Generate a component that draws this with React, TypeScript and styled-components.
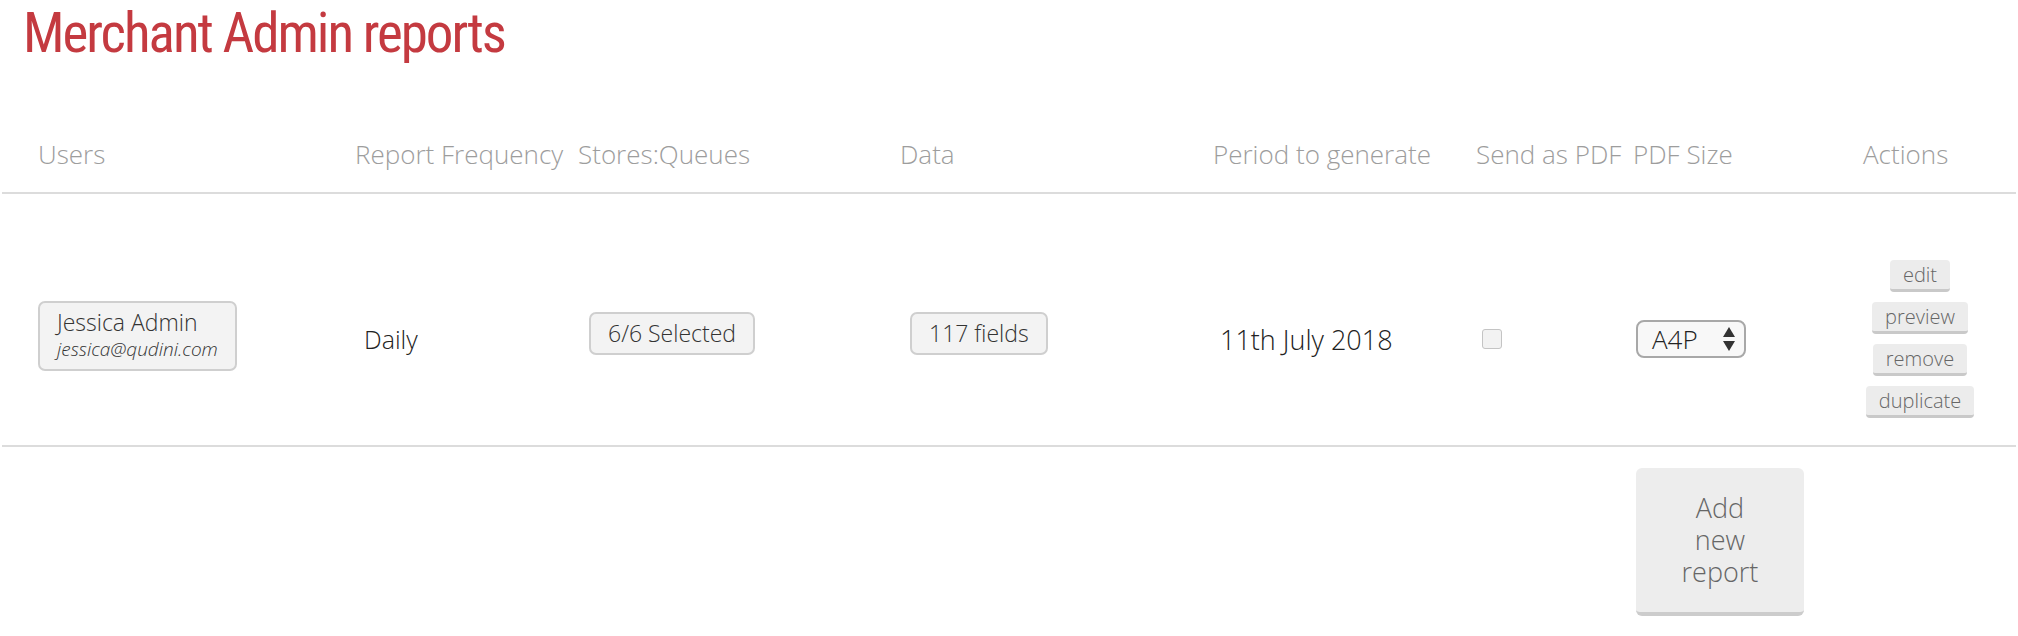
import * as React from 'react'
import styled, { createGlobalStyle } from 'styled-components'

const GlobalStyle = createGlobalStyle`
  html, body {
    margin: 0;
    padding: 0;
    background: #fff;
  }
  body {
    font-family: "Open Sans", "Noto Sans", sans-serif;
    color: #333;
  }
`

const columns = '317px 223px 322px 313px 263px 157px 230px 1fr'

const Page = styled.div`
  width: 2018px;
  height: 636px;
  overflow: hidden;
`

const Title = styled.h1`
  margin: 0;
  padding: 4px 0 0 23px;
  height: 62px;
  box-sizing: border-box;
  font-family: "Roboto Condensed", "Liberation Sans Narrow", "DejaVu Sans Condensed", sans-serif;
  font-weight: 400;
  font-size: 55px;
  letter-spacing: -2px;
  line-height: 58px;
  color: #c43a40;
  white-space: nowrap;
`

const Table = styled.div`
  margin: 56px 2px 0;
`

const HeadRow = styled.div`
  display: grid;
  grid-template-columns: ${columns};
  align-items: center;
  height: 71px;
  padding: 0 0 3px 28px;
  border-bottom: 2px solid #dcdcdc;
`

const HeadCell = styled.div`
  padding-left: 8px;
  font-size: 26px;
  font-weight: 300;
  color: #9d9d9d;
  white-space: nowrap;
`

const Row = styled.div`
  display: grid;
  grid-template-columns: ${columns};
  align-items: center;
  padding: 66px 0 27px 28px;
  border-bottom: 2px solid #dcdcdc;
`

const Cell = styled.div<{ $inset?: number }>`
  display: flex;
  align-items: center;
  padding-left: ${(p) => p.$inset ?? 18}px;
  font-size: 25px;
  font-weight: 300;
  color: #222;
  white-space: nowrap;
`

const UserChip = styled.div`
  display: flex;
  flex-direction: column;
  margin-bottom: 6px;
  padding: 6px 17px 6px;
  background: #f3f3f3;
  border: 2px solid #cfcfcf;
  border-radius: 7px;
`

const UserName = styled.span`
  font-size: 23px;
  line-height: 27px;
  font-weight: 300;
  color: #333;
`

const UserEmail = styled.span`
  font-size: 19px;
  line-height: 27px;
  font-style: italic;
  font-weight: 300;
  color: #333;
`

const Chip = styled.button`
  height: 43px;
  margin-bottom: 12px;
  padding: 0 17px;
  background: #f3f3f3;
  border: 2px solid #cfcfcf;
  border-radius: 7px;
  font-family: inherit;
  font-size: 23px;
  font-weight: 300;
  color: #333;
`

const DateText = styled.span`
  font-size: 27px;
  font-weight: 300;
  color: #222;
`

const Check = styled.input`
  appearance: none;
  width: 20px;
  height: 20px;
  margin: 0;
  border: 1.5px solid #c4c4c4;
  border-radius: 3px;
  background: #f2f2f2;
`

const SizeSelect = styled.div`
  display: flex;
  align-items: center;
  justify-content: space-between;
  width: 110px;
  height: 38px;
  box-sizing: border-box;
  padding: 0 9px 0 14px;
  border: 2px solid #a8a8a8;
  border-radius: 8px;
  background: #f8f8f8;
  font-size: 26px;
  font-weight: 300;
  color: #222;
`

const ActionStack = styled.div`
  display: flex;
  flex-direction: column;
  align-items: center;
  gap: 10px;
  width: 114px;
`

const ActionButton = styled.button`
  height: 32px;
  box-sizing: border-box;
  padding: 0 13px;
  background: #ececec;
  border: none;
  border-bottom: 3px solid #c9c9c9;
  border-radius: 4px;
  font-family: inherit;
  font-size: 20px;
  font-weight: 300;
  line-height: 29px;
  color: #666;
`

const FootRow = styled.div`
  display: grid;
  grid-template-columns: ${columns};
  padding: 21px 0 0 28px;
`

const AddCell = styled.div`
  grid-column: 7;
  padding-left: 11px;
`

const AddButton = styled.button`
  display: flex;
  align-items: center;
  justify-content: center;
  width: 168px;
  height: 148px;
  box-sizing: border-box;
  padding: 0;
  background: #ededed;
  border: none;
  border-bottom: 4px solid #cccccc;
  border-radius: 6px;
  font-family: inherit;
  color: #666;
`

const AddLabel = styled.span`
  width: 90px;
  font-size: 27px;
  font-weight: 300;
  line-height: 32px;
  text-align: center;
`

const headers = [
  'Users',
  'Report Frequency',
  'Stores:Queues',
  'Data',
  'Period to generate',
  'Send as PDF',
  'PDF Size',
  'Actions',
]

const actions = ['edit', 'preview', 'remove', 'duplicate']

const SelectArrows = () => (
  <svg width="12" height="24" viewBox="0 0 12 24">
    <path d="M0 10 L6 0 L12 10 Z" fill="#333" />
    <path d="M0 14 L12 14 L6 24 Z" fill="#333" />
  </svg>
)

export default function App() {
  return (
    <Page>
      <GlobalStyle />
      <Title>Merchant Admin reports</Title>
      <Table>
        <HeadRow>
          {headers.map((h) => (
            <HeadCell key={h}>{h}</HeadCell>
          ))}
        </HeadRow>
        <Row>
          <Cell $inset={8}>
            <UserChip>
              <UserName>Jessica Admin</UserName>
              <UserEmail>jessica@qudini.com</UserEmail>
            </UserChip>
          </Cell>
          <Cell $inset={17}>Daily</Cell>
          <Cell $inset={19}>
            <Chip>6/6 Selected</Chip>
          </Cell>
          <Cell>
            <Chip>117 fields</Chip>
          </Cell>
          <Cell $inset={15}>
            <DateText>11th July 2018</DateText>
          </Cell>
          <Cell $inset={14}>
            <Check type="checkbox" />
          </Cell>
          <Cell $inset={11}>
            <SizeSelect>
              <span>A4P</span>
              <SelectArrows />
            </SizeSelect>
          </Cell>
          <Cell $inset={8}>
            <ActionStack>
              {actions.map((a) => (
                <ActionButton key={a}>{a}</ActionButton>
              ))}
            </ActionStack>
          </Cell>
        </Row>
        <FootRow>
          <AddCell>
            <AddButton>
              <AddLabel>Add new report</AddLabel>
            </AddButton>
          </AddCell>
        </FootRow>
      </Table>
    </Page>
  )
}
